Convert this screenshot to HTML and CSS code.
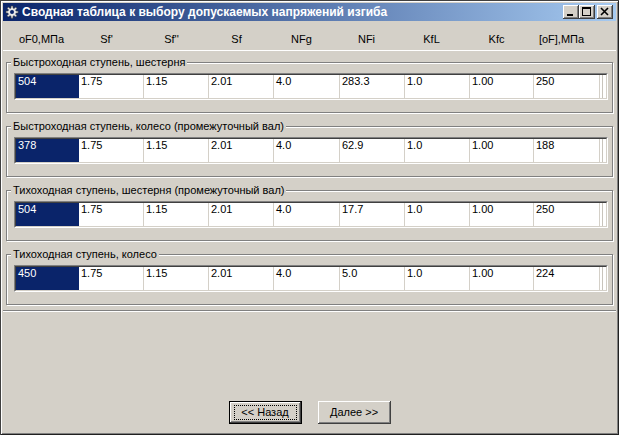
FILE: index.html
```html
<!DOCTYPE html>
<html lang="ru">
<head>
<meta charset="utf-8">
<title>Сводная таблица</title>
<link rel="stylesheet" href="styles.css">
</head>
<body>
<div class="window">
  <div class="titlebar">
    <svg class="app-icon" viewBox="0 0 14 14" width="14" height="14">
      <g fill="#e8e8e8" stroke="#404040" stroke-width="0.6">
        <path d="M6 1h2v2l1.2.5 1.4-1.4 1.4 1.4-1.4 1.4.5 1.2h2v2h-2l-.5 1.2 1.4 1.4-1.4 1.4-1.4-1.4-1.2.5v2H6v-2l-1.2-.5-1.4 1.4-1.4-1.4 1.4-1.4L2.9 8H1V6h2l.5-1.2-1.4-1.4 1.4-1.4 1.4 1.4L6 3z"/>
      </g>
      <circle cx="7" cy="7" r="2" fill="#0a246a"/>
    </svg>
    <span class="title">Сводная таблица к выбору допускаемых напряжений изгиба</span>
    <div class="controls">
      <span class="cbtn"><svg viewBox="0 0 12 10" width="12" height="10"><rect x="2" y="7" width="6" height="2" fill="#000"/></svg></span>
      <span class="cbtn"><svg viewBox="0 0 12 10" width="12" height="10"><rect x="1.5" y="0.5" width="8" height="8" fill="none" stroke="#000"/><rect x="1" y="0" width="9" height="2" fill="#000"/></svg></span>
      <span class="cbtn close"><svg viewBox="0 0 12 10" width="12" height="10"><path d="M2 1l7 7M9 1l-7 7" stroke="#000" stroke-width="1.6"/></svg></span>
    </div>
  </div>
  <div class="client">
    <div class="header">
      <span>oF0,МПа</span><span>Sf'</span><span>Sf''</span><span>Sf</span><span>NFg</span><span>NFi</span><span>KfL</span><span>Kfc</span><span>[oF],МПа</span>
    </div>
    <div class="panel">
      <fieldset class="group">
        <legend>Быстроходная ступень, шестерня</legend>
        <div class="grid"><div class="row">
          <div class="cell c1 sel">504</div><div class="cell c2">1.75</div><div class="cell c3">1.15</div><div class="cell c4">2.01</div><div class="cell c5">4.0</div><div class="cell c6">283.3</div><div class="cell c7">1.0</div><div class="cell c8">1.00</div><div class="cell c9">250</div><div class="tail"></div>
        </div></div>
      </fieldset>
      <fieldset class="group">
        <legend>Быстроходная ступень, колесо (промежуточный вал)</legend>
        <div class="grid"><div class="row">
          <div class="cell c1 sel">378</div><div class="cell c2">1.75</div><div class="cell c3">1.15</div><div class="cell c4">2.01</div><div class="cell c5">4.0</div><div class="cell c6">62.9</div><div class="cell c7">1.0</div><div class="cell c8">1.00</div><div class="cell c9">188</div><div class="tail"></div>
        </div></div>
      </fieldset>
      <fieldset class="group">
        <legend>Тихоходная ступень, шестерня (промежуточный вал)</legend>
        <div class="grid"><div class="row">
          <div class="cell c1 sel">504</div><div class="cell c2">1.75</div><div class="cell c3">1.15</div><div class="cell c4">2.01</div><div class="cell c5">4.0</div><div class="cell c6">17.7</div><div class="cell c7">1.0</div><div class="cell c8">1.00</div><div class="cell c9">250</div><div class="tail"></div>
        </div></div>
      </fieldset>
      <fieldset class="group">
        <legend>Тихоходная ступень, колесо</legend>
        <div class="grid"><div class="row">
          <div class="cell c1 sel">450</div><div class="cell c2">1.75</div><div class="cell c3">1.15</div><div class="cell c4">2.01</div><div class="cell c5">4.0</div><div class="cell c6">5.0</div><div class="cell c7">1.0</div><div class="cell c8">1.00</div><div class="cell c9">224</div><div class="tail"></div>
        </div></div>
      </fieldset>
    </div>
    <div class="buttons">
      <button class="btn default"><span class="focus">&lt;&lt; Назад</span></button>
      <button class="btn"><span class="focus plain">Далее &gt;&gt;</span></button>
    </div>
  </div>
</div>
</body>
</html>
```
FILE: styles.css
```css
* { box-sizing: border-box; }
html, body {
  margin: 0;
  width: 619px;
  height: 435px;
  overflow: hidden;
  background: #000;
}
body {
  font-family: "Liberation Sans", Arial, sans-serif;
  font-size: 11px;
  color: #000;
}
.window {
  width: 619px;
  height: 435px;
  background: #d4d0c8;
  padding: 3px 3px 4px 3px;
  display: flex;
  flex-direction: column;
  box-shadow: inset 1px 1px 0 #404040, inset -1px -1px 0 #202020, inset 2px 2px 0 #fff, inset -2px -2px 0 #808080;
}
.titlebar {
  height: 18px;
  flex: none;
  display: flex;
  align-items: center;
  background: linear-gradient(to right, #0a246a, #a6caf0);
  padding: 0 3px 0 2px;
}
.app-icon {
  flex: none;
  margin-right: 3px;
}
.title {
  flex: 1;
  color: #fff;
  font-weight: bold;
  font-size: 12px;
  white-space: nowrap;
  overflow: hidden;
}
.controls {
  display: flex;
  flex: none;
}
.cbtn {
  width: 16px;
  height: 14px;
  display: flex;
  align-items: center;
  justify-content: center;
  background: #d4d0c8;
  box-shadow: inset -1px -1px 0 #404040, inset 1px 1px 0 #fff, inset -2px -2px 0 #808080;
}
.cbtn.close { margin-left: 2px; }
.client {
  flex: 1;
  display: flex;
  flex-direction: column;
}
.header {
  flex: none;
  height: 30px;
  display: grid;
  grid-template-columns: repeat(9, 65px);
  padding: 12px 0 0 6px;
  line-height: 13px;
  border-bottom: 1px solid #fff;
}
.header span { text-align: center; white-space: nowrap; }
.panel {
  flex: none;
  height: 260px;
  padding: 5px 3px 0 3px;
  display: flex;
  flex-direction: column;
  gap: 7px;
  border-bottom: 1px solid #808080;
  box-shadow: 0 1px 0 #fff;
}
.group {
  margin: 0;
  min-width: 0;
  padding: 5px 4px 12px 7px;
  border: 1px solid #808080;
  box-shadow: inset 1px 1px 0 #fff, 1px 1px 0 #fff;
}
.group legend {
  padding: 0 2px;
  margin-left: -3px;
  line-height: 12px;
  font-size: 11px;
  background: #d4d0c8;
  white-space: nowrap;
}
.grid {
  height: 27px;
  border-top: 1px solid #808080;
  border-left: 1px solid #808080;
  border-bottom: 1px solid #fff;
  border-right: 1px solid #fff;
}
.row {
  height: 100%;
  display: flex;
  background: #fff;
  border-top: 1px solid #404040;
  border-left: 1px solid #404040;
  border-bottom: 1px solid #d4d0c8;
  border-right: 1px solid #d4d0c8;
}
.cell {
  flex: none;
  height: 100%;
  padding: 0 2px;
  line-height: 13px;
  border-right: 1px solid #d4d0c8;
  white-space: nowrap;
}
.cell.c1 { width: 63px; }
.cell.c2, .cell.c3, .cell.c4, .cell.c6, .cell.c7 { width: 65px; }
.cell.c5 { width: 66px; }
.cell.c8 { width: 64px; }
.cell.c9 { width: 66px; }
.cell.sel {
  background: #0a246a;
  color: #fff;
  border-right-color: #0a246a;
}
.tail {
  flex: 1;
  background: linear-gradient(to right, #fff 2px, #c8c4bc 2px, #c8c4bc 3px, #fff 3px);
}
.buttons {
  margin-top: auto;
  display: flex;
  justify-content: center;
  gap: 16px;
  padding-bottom: 7px;
}
.btn {
  width: 73px;
  height: 23px;
  padding: 0;
  margin: 0;
  font: 11px "Liberation Sans", Arial, sans-serif;
  color: #000;
  background: #d4d0c8;
  border: none;
  box-shadow: inset -1px -1px 0 #404040, inset 1px 1px 0 #fff, inset -2px -2px 0 #808080;
  display: flex;
  align-items: center;
  justify-content: center;
}
.btn.default {
  box-shadow: inset 0 0 0 1px #000, inset -2px -2px 0 #404040, inset 2px 2px 0 #fff, inset -3px -3px 0 #808080;
}
.focus {
  display: block;
  width: 63px;
  height: 15px;
  line-height: 13px;
  border: 1px dotted #000;
  text-align: center;
}
.focus.plain { border-color: transparent; }
```
